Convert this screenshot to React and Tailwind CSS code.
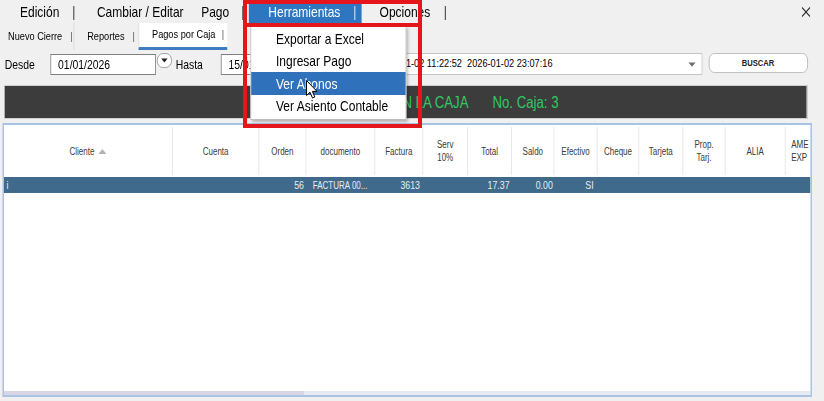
export default function App() {
  const cols = [
    { w: "w-[211px]", label: "Cliente", sort: true },
    { w: "w-[108px]", label: "Cuenta" },
    { w: "w-[59px]", label: "Orden" },
    { w: "w-[86px]", label: "documento" },
    { w: "w-[60px]", label: "Factura" },
    { w: "w-[56px]", label: "Serv\n10%" },
    { w: "w-[55px]", label: "Total" },
    { w: "w-[53px]", label: "Saldo" },
    { w: "w-[54px]", label: "Efectivo" },
    { w: "w-[52px]", label: "Cheque" },
    { w: "w-[55px]", label: "Tarjeta" },
    { w: "w-[53px]", label: "Prop.\nTarj." },
    { w: "w-[75px]", label: "ALIA" },
  ];

  const row = [
    { w: "w-[211px]", v: "i", cls: "justify-start pl-[3px]" },
    { w: "w-[108px]", v: "" },
    { w: "w-[59px]", v: "56", cls: "justify-end pr-[3px]" },
    { w: "w-[86px]", v: "FACTURA 00...", cls: "justify-start pl-[8px] text-[10px]" },
    { w: "w-[60px]", v: "3613", cls: "justify-end pr-[4px]" },
    { w: "w-[56px]", v: "" },
    { w: "w-[55px]", v: "17.37", cls: "justify-end pr-[3px]" },
    { w: "w-[53px]", v: "0.00", cls: "justify-end pr-[2px]" },
    { w: "w-[54px]", v: "SI", cls: "justify-end pr-[5px]" },
  ];

  const DropCircle = () => (
    <div className="ml-[1px] -mt-[1px] w-[19px] h-[15px] rounded-full border border-[#9a9a9a] bg-white flex items-center justify-center shrink-0">
      <svg width="9" height="5" viewBox="0 0 9 5">
        <path d="M0.5 0.5 L8.5 0.5 L4.5 4.5 Z" fill="#222" />
      </svg>
    </div>
  );

  return (
    <div className="relative w-[824px] h-[401px] overflow-hidden bg-[#f0f0f0] font-['Liberation_Sans',Arial,sans-serif] text-black">
      <div className="relative w-[1030px] h-[401px] origin-top-left scale-x-[0.8] flex flex-col">
        {/* Menu bar */}
        <div className="flex items-center h-[23px] text-[15px] shrink-0 leading-none">
          <span className="ml-[25px]">Edición</span>
          <span className="ml-[16px] text-[#333]">|</span>
          <span className="ml-[27px]">Cambiar / Editar</span>
          <span className="ml-[22px]">Pago</span>
          <span className="ml-[15px] text-[#333]">|</span>
          <div className="ml-[6px] w-[141px] h-full bg-[#2f76c0] text-white flex items-center pl-[24px]">
            <span>Herramientas</span>
            <span className="ml-[16px] text-[#d6e4f4]">|</span>
          </div>
          <span className="ml-[22px]">Opciones</span>
          <span className="ml-[17px] text-[#333]">|</span>
          <svg
            className="ml-auto mr-[17px] w-[11px] h-[10px]"
            viewBox="0 0 11 10"
            preserveAspectRatio="none"
          >
            <path d="M0.5 0.5 L10.5 9.5 M10.5 0.5 L0.5 9.5" stroke="#222" strokeWidth="1.1" fill="none" />
          </svg>
        </div>

        {/* Tabs */}
        <div className="flex h-[27px] shrink-0 text-[11.5px] text-black">
          <div className="flex items-center pl-[10px] w-[93px] border-r border-[#d8d8d8]">
            <span>Nuevo Cierre</span>
            <span className="ml-[10px] text-[#555]">|</span>
          </div>
          <div className="flex items-center pl-[16px] w-[80px]">
            <span>Reportes</span>
            <span className="ml-[10px] text-[#555]">|</span>
          </div>
          <div className="flex items-center pl-[16px] w-[111px] bg-white border-b-[3px] border-[#3f7bc1] border-l border-l-[#d8d8d8]">
            <span>Pagos por Caja</span>
            <span className="ml-[8px] text-[#555]">|</span>
          </div>
        </div>

        {/* Filter row */}
        <div className="flex h-[30px] shrink-0 pt-[4px] text-[13px] items-start">
          <span className="ml-[6px] h-[21px] flex items-center">Desde</span>
          <div className="ml-[19px] w-[132px] h-[21px] border border-[#7f7f7f] bg-white pl-[9px] flex items-center shrink-0">
            01/01/2026
          </div>
          <DropCircle />
          <span className="ml-[5px] h-[21px] flex items-center">Hasta</span>
          <div className="ml-[22px] w-[132px] h-[21px] border border-[#7f7f7f] bg-white pl-[9px] flex items-center shrink-0">
            15/01/2026
          </div>
          <DropCircle />
          <div className="ml-[20px] w-[430px] h-[22px] -mt-[1px] border border-[#c4c4c4] bg-white pl-[23px] pr-[7px] flex items-center shrink-0 text-[11.5px] whitespace-pre">
            <span>2026-01-02 11:22:52  2026-01-02 23:07:16</span>
            <svg className="ml-auto" width="10" height="5" viewBox="0 0 10 5">
              <path d="M0.5 0.5 L9.5 0.5 L5 4.8 Z" fill="#707070" />
            </svg>
          </div>
          <div className="ml-[8px] w-[124px] h-[20px] -mt-[1px] rounded-[7px] border border-[#b9b9b9] bg-white flex items-center justify-center text-[9.5px] font-bold text-[#222] shrink-0">
            BUSCAR
          </div>
        </div>

        {/* Banner */}
        <div className="mt-[5px] ml-[5px] w-[1004px] h-[34px] shrink-0 bg-[#3c3c3c] border border-[#cfcfcf] flex items-center pl-[486px] text-[16.5px] text-[#2fca63] whitespace-nowrap">
          <span>EN LA CAJA</span>
          <span className="ml-[30px]">No. Caja: 3</span>
        </div>

        {/* Grid */}
        <div className="mt-[4px] ml-[3px] w-[1012px] h-[274px] shrink-0 border-2 border-[#a9c4e2] bg-white flex flex-col overflow-hidden">
          <div className="flex h-[52px] shrink-0 items-start text-[10px] text-[#3a3a3a] leading-[13px] overflow-hidden">
            {cols.map((c, i) => (
              <div
                key={i}
                className={`${c.w} shrink-0 h-[48px] mt-[2px] border-r border-[#e3e3e3] flex items-center justify-center text-center whitespace-pre`}
              >
                <span>{c.label}</span>
                {c.sort && (
                  <svg className="ml-[5px]" width="10" height="5" viewBox="0 0 10 5">
                    <path d="M0 5 L5 0 L10 5 Z" fill="#b3b3b3" />
                  </svg>
                )}
              </div>
            ))}
            <div className="w-[40px] shrink-0 h-[48px] mt-[2px] flex items-center pl-[7px] whitespace-pre overflow-hidden">
              {"AME\nEXP"}
            </div>
          </div>
          <div className="flex h-[16px] shrink-0 bg-[#3f6a8c] text-[11px] text-[#e8eef4] overflow-hidden">
            {row.map((c, i) => (
              <div key={i} className={`${c.w} shrink-0 h-full flex items-center whitespace-nowrap ${c.cls || ""}`}>
                {c.v}
              </div>
            ))}
          </div>
          <div className="flex-1 bg-white" />
          <div className="h-[4px] shrink-0 bg-[#e6eaf2] flex">
            <div className="w-[375px] h-full bg-[#d9d4e6]" />
          </div>
        </div>

        {/* Dropdown menu */}
        <div className="absolute left-[313px] top-[26px] w-[195px] bg-white border border-[#bcbcbc] shadow-[2px_2px_3px_rgba(0,0,0,0.25)] pb-[2px] text-[15px] leading-none">
          <div className="h-[22.5px] flex items-center pl-[31px]">Exportar a Excel</div>
          <div className="h-[22.5px] flex items-center pl-[31px]">Ingresar Pago</div>
          <div className="h-[22.5px] flex items-center pl-[31px] bg-[#2f71bb] text-white">Ver Abonos</div>
          <div className="h-[22.5px] flex items-center pl-[31px]">Ver Asiento Contable</div>
        </div>
      </div>

      {/* Red annotation box */}
      <div className="absolute left-[243px] top-0 w-[179px] h-[128px] border-[4px] border-[#e5151d] pointer-events-none" />
      <div className="absolute left-[243px] top-[23px] w-[179px] h-[4px] bg-[#e5151d] pointer-events-none" />

      {/* Mouse cursor */}
      <svg className="absolute left-[306px] top-[80px]" width="12" height="19" viewBox="0 0 12 19">
        <path
          d="M0.5 0.5 L0.5 15.5 L4 12.2 L6.5 18 L8.8 17 L6.4 11.4 L11 11.4 Z"
          fill="white"
          stroke="black"
          strokeWidth="1"
          strokeLinejoin="round"
        />
      </svg>
    </div>
  );
}
